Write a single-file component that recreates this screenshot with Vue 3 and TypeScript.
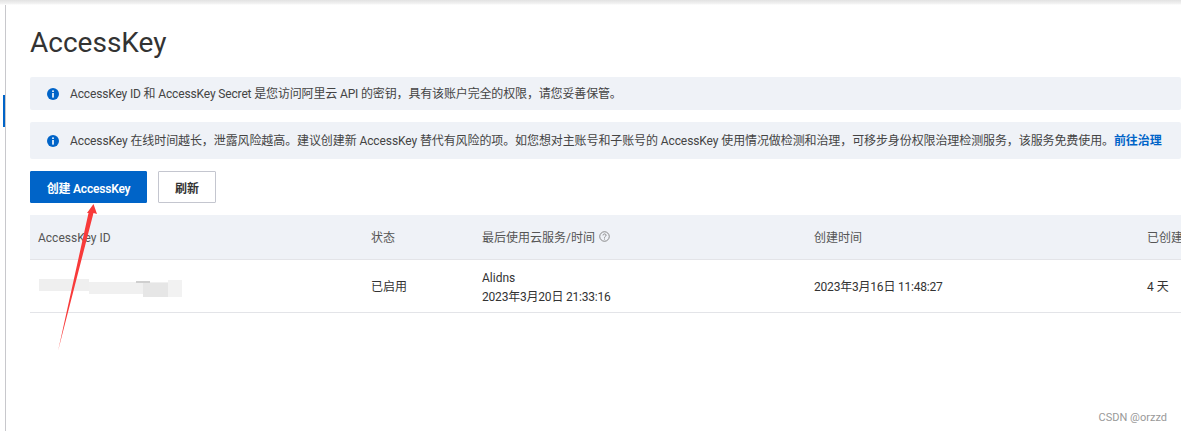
<template>
  <div class="page">
    <div class="topbar"></div>
    <div class="layout">
      <aside class="rail"><span class="rail-mark"></span></aside>
      <main class="content">
        <h1 class="title">AccessKey</h1>

        <div v-for="(notice, i) in notices" :key="i" class="notice" :class="{ tall: i === 1 }">
          <svg class="info" viewBox="0 0 12 12" width="12" height="12">
            <circle cx="6" cy="6" r="6" fill="#0064c8" />
            <rect x="5.2" y="2.4" width="1.6" height="1.6" fill="#fff" />
            <rect x="5.2" y="5" width="1.6" height="4.6" fill="#fff" />
          </svg>
          <span>{{ notice }}<a v-if="i === 1" class="link">前往治理</a></span>
        </div>

        <div class="actions">
          <button class="btn-primary">创建 AccessKey</button>
          <button class="btn-secondary">刷新</button>
        </div>

        <div class="table">
          <div class="row head">
            <div class="latin">AccessKey ID</div>
            <div>状态</div>
            <div class="with-help">
              最后使用云服务/时间
              <svg viewBox="0 0 12 12" width="11" height="11" fill="none" stroke="#808080">
                <circle cx="6" cy="6" r="5.2" />
                <path d="M4.4 4.8c0-2.1 3.3-2.1 3.3-.1 0 1.2-1.7 1.2-1.7 2.6" />
                <path d="M6 8.2v1.1" />
              </svg>
            </div>
            <div>创建时间</div>
            <div>已创建时长</div>
          </div>
          <div class="row body">
            <div class="key-cell">
              <span class="smudge s1"></span>
              <span class="smudge s2"></span>
              <span class="smudge s3"></span>
              <span class="smudge s4"></span>
              <span class="smudge s5"></span>
            </div>
            <div>已启用</div>
            <div class="stack">
              <span>Alidns</span>
              <span class="date">2023年3月20日 21:33:16</span>
            </div>
            <div class="date">2023年3月16日 11:48:27</div>
            <div>4 天</div>
          </div>
        </div>
      </main>
    </div>

    <svg class="arrow" width="1181" height="431" viewBox="0 0 1181 431">
      <polygon points="58,351 88.500,213 87,213 93.500,204 97,214 93.500,213" fill="#f83a3a" />
    </svg>
    <div class="watermark">CSDN @orzzd</div>
  </div>
</template>

<script setup lang="ts">
const notices: string[] = [
  "AccessKey ID 和 AccessKey Secret 是您访问阿里云 API 的密钥，具有该账户完全的权限，请您妥善保管。",
  "AccessKey 在线时间越长，泄露风险越高。建议创建新 AccessKey 替代有风险的项。如您想对主账号和子账号的 AccessKey 使用情况做检测和治理，可移步身份权限治理检测服务，该服务免费使用。",
];
</script>

<style>
html,
body {
  margin: 0;
  background: #fff;
  overflow: hidden;
}
</style>

<style scoped>
.page {
  position: relative;
  width: 1181px;
  height: 431px;
  overflow: hidden;
  background: #fff;
  color: #333;
  font-family: Roboto, "Noto Sans CJK SC", sans-serif;
  font-size: 12px;
}

.topbar {
  height: 5px;
  background: linear-gradient(#e2e2e2, #f2f2f2 70%, #fff);
}

.layout {
  display: flex;
  height: 426px;
}

.rail {
  width: 5px;
  flex: none;
  border-right: 1px solid #c8c8cc;
  padding-top: 90px;
  height: 336px;
  display: flex;
  justify-content: flex-end;
}

.rail-mark {
  width: 2px;
  height: 32px;
  background: #0064c8;
}

.content {
  flex: 1;
  min-width: 0;
  padding-left: 24px;
}

.title {
  margin: 20px 0 0;
  font-size: 28px;
  font-weight: 400;
  line-height: 36px;
  color: #333;
}

.notice {
  height: 33px;
  margin-top: 12px;
  padding-left: 17px;
  display: flex;
  align-items: center;
  gap: 11px;
  background: #eff2f7;
  border-radius: 2px;
  color: #444;
  white-space: nowrap;
  line-height: 16px;
  letter-spacing: -0.15px;
}

.notice:first-of-type {
  margin-top: 16px;
}

.notice.tall {
  height: 37px;
  letter-spacing: -0.1px;
}

.info {
  flex: none;
}

.link {
  color: #0064c8;
  font-weight: 600;
}

.actions {
  display: flex;
  gap: 11px;
  margin-top: 12px;
}

.actions button {
  height: 32px;
  padding: 0;
  font: 600 12px Roboto, "Noto Sans CJK SC", sans-serif;
  border-radius: 1px;
}

.btn-primary {
  width: 117px;
  color: #fff;
  background: #0064c8;
  border: 1px solid #0064c8;
  letter-spacing: -0.2px;
}

.btn-secondary {
  width: 58px;
  color: #333;
  background: #fff;
  border: 1px solid #c4c6cf;
}

.table {
  margin-top: 12px;
  width: 1400px;
}

.row {
  display: grid;
  grid-template-columns: 333px 111px 332px 333px 1fr;
  align-items: center;
}

.row > div {
  padding-left: 8px;
  padding-bottom: 1px;
}

.head {
  height: 44px;
  background: #eff2f7;
  border-bottom: 1px solid #e3e4e8;
  color: #555;
}

.row > .latin {
  padding-bottom: 0;
  padding-top: 1px;
}

.with-help {
  display: flex;
  align-items: center;
  gap: 4px;
}

.body {
  height: 52px;
  border-bottom: 1px solid #e3e4e8;
}

.row > .stack {
  display: flex;
  flex-direction: column;
  line-height: 19px;
  padding-bottom: 0;
  padding-top: 3px;
}

.date {
  letter-spacing: -0.2px;
}

.row > .key-cell {
  position: relative;
  height: 20px;
  padding: 0;
}

.smudge {
  position: absolute;
  background: #efefef;
  filter: blur(0.7px);
}

.s1 {
  left: 9px;
  top: 3px;
  width: 50px;
  height: 12px;
}

.s2 {
  left: 59px;
  top: 6px;
  width: 80px;
  height: 12px;
  background: #f0f0f0;
}

.s3 {
  left: 113px;
  top: 7px;
  width: 25px;
  height: 14px;
  background: #e6e6e6;
}

.s4 {
  left: 138px;
  top: 4px;
  width: 14px;
  height: 17px;
  background: #f2f2f2;
}

.s5 {
  left: 106px;
  top: 5px;
  width: 14px;
  height: 2px;
  background: #cfcfcf;
}

.arrow {
  position: absolute;
  left: 0;
  top: 0;
  pointer-events: none;
}

.watermark {
  position: absolute;
  right: 14px;
  bottom: 6px;
  font-size: 11px;
  line-height: 14px;
  color: #999;
}
</style>
